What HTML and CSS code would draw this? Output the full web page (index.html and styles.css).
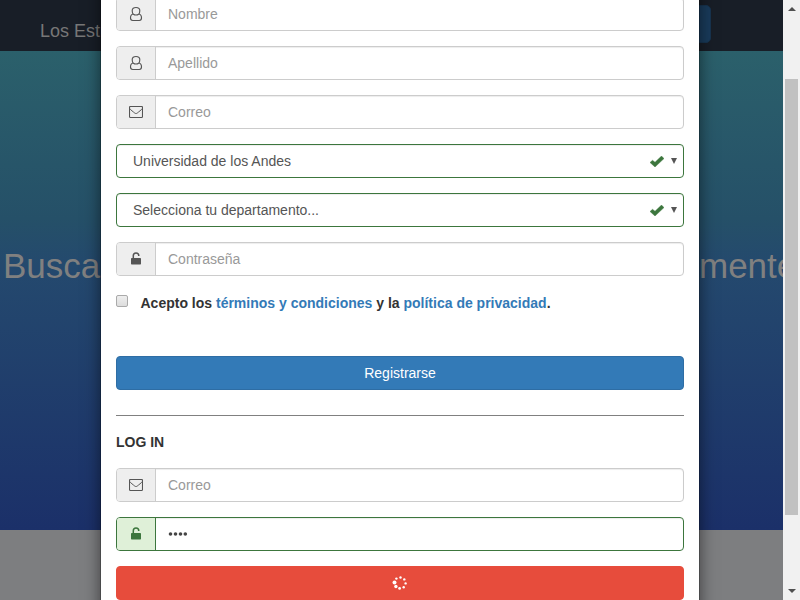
FILE: index.html
```html
<!DOCTYPE html>
<html lang="es">
<head>
<meta charset="utf-8">
<title>Los Estudiantes</title>
<link rel="stylesheet" href="styles.css">
</head>
<body>
<svg class="defs" width="0" height="0">
  <symbol id="user" viewBox="0 0 14 16"><path d="M4.4 8.2C3.2 7.2 3.2 5.9 3.2 4.7C3.2 2.5 4.7 1.5 7 1.5S10.8 2.5 10.8 4.7C10.8 5.9 10.8 7.2 9.6 8.2C8.8 8.8 8 9 7 9S5.2 8.8 4.4 8.2ZM4.2 8C2.2 8.3 1.5 10 1.5 12.1C1.5 13.7 2.2 14.5 3.7 14.5H10.3C11.8 14.5 12.5 13.7 12.5 12.1C12.5 10 11.8 8.3 9.8 8" fill="none" stroke="currentColor" stroke-width="1.15"/></symbol>
  <symbol id="mail" viewBox="0 0 14 12"><rect x=".5" y=".5" width="13" height="11" rx=".9" fill="none" stroke="currentColor" stroke-width="1.1"/><path d="M.7 2.5C1.3 3.7 4.5 6 5.7 7C6.6 7.7 7.4 7.7 8.3 7C9.5 6 12.7 3.7 13.3 2.5" fill="none" stroke="currentColor"/></symbol>
  <symbol id="lock" viewBox="0 0 10 13"><rect y="6" width="10" height="6.5" rx=".7" fill="currentColor"/><path d="M2.3 6.5V3.8C2.3 2 3.4 1 5 1S7.8 2 7.8 3.9" fill="none" stroke="currentColor" stroke-width="1.5"/></symbol>
  <symbol id="check" viewBox="0 0 14 11"><path d="M0 6.5L2.5 4.3L5 6.2L11.5 0L14 2.6L5 11Z" fill="currentColor" stroke="currentColor" stroke-width=".4"/></symbol>
</svg>
<div class="window">
  <div class="page">
    <header class="navbar"><span>Los Estudiantes</span><div class="nav-button"></div></header>
    <section class="hero"><span class="hero-start">Busca</span><span class="hero-end">mente</span></section>
    <div class="below"></div>
  </div>
  <div class="scrollbar"><i class="arrow-up"></i><div class="thumb"></div><i class="arrow-down"></i></div>
  <main class="modal">
    <div class="group"><span class="addon"><svg width="14" height="16"><use href="#user"/></svg></span><span class="field">Nombre</span></div>
    <div class="group"><span class="addon"><svg width="14" height="16"><use href="#user"/></svg></span><span class="field">Apellido</span></div>
    <div class="group"><span class="addon"><svg width="14" height="12"><use href="#mail"/></svg></span><span class="field">Correo</span></div>
    <div class="group select"><span class="value">Universidad de los Andes</span><svg class="check" width="14" height="11"><use href="#check"/></svg><i class="caret"></i></div>
    <div class="group select"><span class="value">Selecciona tu departamento...</span><svg class="check" width="14" height="11"><use href="#check"/></svg><i class="caret"></i></div>
    <div class="group"><span class="addon"><svg class="lock" width="10" height="13"><use href="#lock"/></svg></span><span class="field">Contraseña</span></div>
    <div class="terms"><span class="checkbox"></span><b>Acepto los <a>términos y condiciones</a> y la <a>política de privacidad</a>.</b></div>
    <div class="button">Registrarse</div>
    <div class="rule"></div>
    <h2>LOG IN</h2>
    <div class="group"><span class="addon"><svg width="14" height="12"><use href="#mail"/></svg></span><span class="field">Correo</span></div>
    <div class="group valid"><span class="addon"><svg class="lock" width="10" height="13"><use href="#lock"/></svg></span><span class="field"><svg width="20" height="4"><g fill="#444"><circle cx="2.5" cy="2" r="1.8"/><circle cx="7.5" cy="2" r="1.8"/><circle cx="12.5" cy="2" r="1.8"/><circle cx="17.3" cy="2" r="1.8"/></g></svg></span></div>
    <div class="button loading"><svg width="16" height="16"><g fill="#fff"><circle cx="2.5" cy="7.5" r="2"/><circle cx="3.9" cy="11.5" r="1.7"/><circle cx="7.6" cy="13.4" r="1.4"/><circle cx="11.7" cy="12.2" r="1.2"/><circle cx="13.6" cy="8.4" r="1.2"/><circle cx="12.3" cy="4.4" r="1.2"/><circle cx="8.5" cy="2.5" r="1.2"/><circle cx="4.4" cy="3.6" r="1.2"/></g></svg></div>
  </main>
</div>
</body>
</html>
```
FILE: styles.css
```css
* { box-sizing: border-box; }
body { margin: 0; font: 14px/20px "Liberation Sans", Arial, sans-serif; color: #333; overflow: hidden; }
.defs { position: absolute; }
.window { position: relative; display: flex; width: 800px; height: 600px; overflow: hidden; }
.page { width: 783px; height: 600px; overflow: hidden; }
.navbar { display: flex; justify-content: space-between; height: 51px; padding: 5px 72px 0 40px; background: #181e27; color: #777; font-size: 18px; }
.navbar span { padding-top: 16px; }
.nav-button { width: 100px; height: 38px; border: 1px solid #17344f; border-radius: 5px; background: #193b5b; }
.hero { display: flex; justify-content: space-between; height: 479px; padding: 195px 0 0 3px; background: linear-gradient(#2b606b, #255068 35%, #24496e 45%, #1b3069); color: #808080; font-size: 35px; line-height: 40px; white-space: nowrap; }
.hero-end { width: 84px; overflow: hidden; }
.below { height: 70px; background: #7d7e80; }
.scrollbar { width: 17px; height: 600px; background: #f1f1f1; display: flex; flex-direction: column; align-items: center; justify-content: space-between; padding: 7px 0; }
.arrow-up, .arrow-down { border: 4px solid transparent; width: 0; height: 0; }
.arrow-up { border-top: 0; border-bottom: 4px solid #505050; }
.arrow-down { border-bottom: 0; border-top: 4px solid #505050; }
.thumb { width: 13px; height: 436px; background: #c1c1c1; margin: 0 0 6px; }
.modal { position: absolute; left: 100px; top: -40px; width: 600px; height: 680px; padding: 36px 15px 0; border: 1px solid rgba(0,0,0,.2); background: #fff; background-clip: padding-box; box-shadow: 0 5px 15px rgba(0,0,0,.5); }
.group { display: flex; height: 34px; margin-bottom: 15px; border: 1px solid #ccc; border-radius: 4px; box-shadow: inset 0 1px 1px rgba(0,0,0,.075); }
.addon { display: flex; align-items: center; justify-content: center; width: 39px; background: #eee; border-right: 1px solid #ccc; color: #555; border-radius: 3px 0 0 3px; }
.lock { margin-top: -1px; }
.field { display: flex; align-items: center; padding-left: 12px; color: #999; }
.select, .valid { border-color: #3c763d; }
.select { align-items: center; padding: 0 6px 0 16px; color: #555; }
.value { flex: 1; }
.check { color: #3c763d; margin: 1px 7px 0 0; }
.caret { width: 0; height: 0; border: 3px solid transparent; border-top: 6px solid #555; border-bottom: 0; }
.valid .addon { background: #dff0d8; border-color: #3c763d; color: #3c763d; }
.terms { display: flex; height: 65px; padding-top: 2px; gap: 12.5px; }
.checkbox { width: 12px; height: 12px; margin-top: 2px; border: 1px solid #aaa; border-radius: 2px; background: linear-gradient(#eee, #ddd); }
a { color: #337ab7; }
.button { display: flex; align-items: center; justify-content: center; height: 34px; border: 1px solid #2e6da4; border-radius: 4px; background: #337ab7; color: #fff; }
.rule { height: 1px; margin-top: 25px; background: #808080; }
h2 { margin: 16px 0; font-size: 14px; line-height: 20px; }
.loading { border-color: #e74c3c; background: #e74c3c; }
```
